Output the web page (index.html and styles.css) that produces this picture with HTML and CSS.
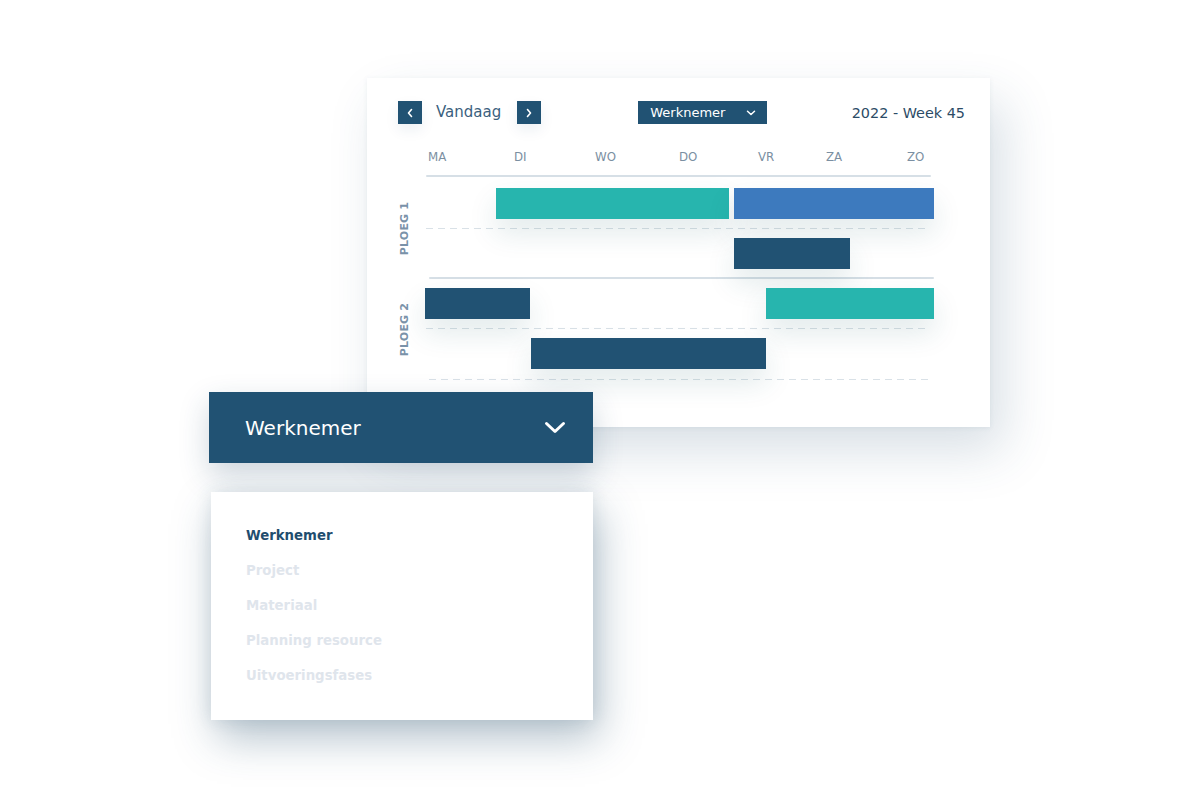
FILE: index.html
```html
<!DOCTYPE html>
<html lang="nl">
<head>
<meta charset="utf-8">
<title>Planning</title>
<link rel="stylesheet" href="styles.css">
</head>
<body>
<div class="stage">
  <section class="card">
    <header class="toolbar">
      <div class="nav">
        <button class="navbtn" aria-label="Vorige">
          <svg width="8" height="10" viewBox="0 0 8 10"><polyline points="5.5,1.5 2.5,5 5.5,8.5" fill="none" stroke="#fff" stroke-width="1.6" stroke-linecap="round" stroke-linejoin="round"/></svg>
        </button>
        <span class="today">Vandaag</span>
        <button class="navbtn" aria-label="Volgende">
          <svg width="8" height="10" viewBox="0 0 8 10"><polyline points="2.5,1.5 5.5,5 2.5,8.5" fill="none" stroke="#fff" stroke-width="1.6" stroke-linecap="round" stroke-linejoin="round"/></svg>
        </button>
      </div>
      <div class="select-sm">
        <span>Werknemer</span>
        <svg width="10" height="6" viewBox="0 0 10 6"><polyline points="1.5,1.2 5,4.5 8.5,1.2" fill="none" stroke="#fff" stroke-width="1.5" stroke-linecap="round" stroke-linejoin="round"/></svg>
      </div>
      <div class="week">2022 - Week 45</div>
    </header>

    <div class="days">
      <span>MA</span><span>DI</span><span>WO</span><span>DO</span><span>VR</span><span>ZA</span><span>ZO</span>
    </div>

    <div class="chart">
      <div class="rule solid first"></div>
      <div class="group">
        <div class="glabel"><span>PLOEG 1</span></div>
        <div class="lanes">
          <div class="row">
            <div class="bar teal" style="margin-left:80px;width:233px"></div>
            <div class="bar blue" style="margin-left:5px;width:200px"></div>
          </div>
          <div class="rule dashed"></div>
          <div class="row">
            <div class="bar navy" style="margin-left:318px;width:116px"></div>
          </div>
        </div>
      </div>
      <div class="rule solid second"></div>
      <div class="group">
        <div class="glabel"><span>PLOEG 2</span></div>
        <div class="lanes">
          <div class="row">
            <div class="bar navy" style="margin-left:9px;width:105px"></div>
            <div class="bar teal" style="margin-left:236px;width:168px"></div>
          </div>
          <div class="rule dashed"></div>
          <div class="row">
            <div class="bar navy" style="margin-left:115px;width:235px"></div>
          </div>
          <div class="rule dashed last"></div>
        </div>
      </div>
    </div>
  </section>

  <div class="picker">
    <div class="select-lg">
      <span>Werknemer</span>
      <svg width="22" height="14" viewBox="0 0 22 14"><polyline points="2.5,2.5 11,10.5 19.5,2.5" fill="none" stroke="#fff" stroke-width="3" stroke-linecap="round" stroke-linejoin="round"/></svg>
    </div>
    <ul class="menu">
      <li class="active">Werknemer</li>
      <li>Project</li>
      <li>Materiaal</li>
      <li>Planning resource</li>
      <li>Uitvoeringsfases</li>
    </ul>
  </div>
</div>
</body>
</html>
```

FILE: styles.css
```css
* { box-sizing: border-box; }

html, body {
  margin: 0;
  padding: 0;
  background: #ffffff;
}

body {
  font-family: "DejaVu Sans", "Open Sans", sans-serif;
  width: 1200px;
  height: 800px;
  overflow: hidden;
}

.stage {
  position: relative;
  width: 1200px;
  height: 800px;
  padding: 78px 0 0 367px;
}

/* ---------- planning card ---------- */
.card {
  width: 623px;
  height: 349px;
  background: #fff;
  padding: 23px 25px 0 31px;
  box-shadow: 14px 24px 48px rgba(45, 85, 115, 0.18), 0 1px 5px rgba(45, 85, 115, 0.08);
}

.toolbar {
  display: flex;
  align-items: center;
  height: 23px;
}

.nav {
  display: flex;
  align-items: center;
}

.navbtn {
  width: 24px;
  height: 23px;
  padding: 0;
  border: 0;
  background: #215273;
  display: flex;
  align-items: center;
  justify-content: center;
  box-shadow: 0 6px 14px rgba(30, 70, 100, 0.08);
}

.today {
  font-size: 15px;
  color: #3b5f7e;
  margin: 0 16px 0 14px;
  line-height: 23px;
}

.select-sm {
  margin-left: 97px;
  width: 129px;
  height: 23px;
  background: #215273;
  color: #fff;
  font-size: 13px;
  display: flex;
  align-items: center;
  justify-content: space-between;
  padding: 0 11px 0 12px;
}

.week {
  margin-left: auto;
  font-size: 14.4px;
  color: #2c4b66;
}

.days {
  display: grid;
  grid-template-columns: 86px 81px 84px 79px 68px 81px auto;
  margin: 26px 0 0 30px;
  font-size: 11.8px;
  color: #7b8fa2;
  height: 15px;
  line-height: 15px;
}

.chart {
  margin-top: 10px;
}

.rule.solid {
  height: 2px;
  background: #d6dfe6;
  border-radius: 1px;
}
.rule.solid.first { margin-left: 28px; width: 505px; margin-bottom: 2px; }
.rule.solid.second { margin-left: 31px; width: 505px; margin-top: -1px; }

.rule.dashed {
  height: 1px;
  background: repeating-linear-gradient(90deg, #d9e1e7 0 7px, transparent 7px 12px);
  margin: 0 10px 0 10px;
  width: 504px;
}
.rule.dashed.last { margin-left: 13px; width: 500px; margin-top: 1px; }

.group {
  display: flex;
}

.glabel {
  width: 14px;
  margin-right: 4px;
  display: flex;
  align-items: center;
  justify-content: center;
}

.glabel span {
  display: block;
  white-space: nowrap;
  transform: rotate(-90deg);
  font-size: 11px;
  font-weight: bold;
  color: #7a92a9;
  letter-spacing: 0.2px;
}

.lanes {
  width: 524px;
}

.row {
  display: flex;
  height: 49px;
  padding: 9px 0 9px 0;
}

.bar {
  height: 31px;
  flex: none;
  box-shadow: 0 14px 28px rgba(30, 90, 100, 0.13);
}
.bar.teal { background: #27b5ae; }
.bar.blue { background: #3d7abe; }
.bar.navy { background: #215273; }

/* ---------- dropdown overlay ---------- */
.picker {
  position: absolute;
  left: 209px;
  top: 392px;
  width: 384px;
}

.select-lg {
  height: 71px;
  background: #215273;
  color: #fff;
  font-size: 20px;
  display: flex;
  align-items: center;
  justify-content: space-between;
  padding: 0 27px 0 36px;
  box-shadow: 0 12px 30px rgba(30, 70, 100, 0.22);
}

.menu {
  list-style: none;
  margin: 29px 0 0 2px;
  padding: 34px 0 0 35px;
  height: 228px;
  width: 382px;
  background: #fff;
  box-shadow: 6px 18px 40px rgba(40, 80, 110, 0.35), 0 0 16px rgba(40, 80, 110, 0.12);
}

.menu li {
  font-size: 13.3px;
  font-weight: bold;
  color: #dfe5ec;
  height: 35px;
  line-height: 20px;
}

.menu li.active {
  color: #1f4d6e;
}
```
